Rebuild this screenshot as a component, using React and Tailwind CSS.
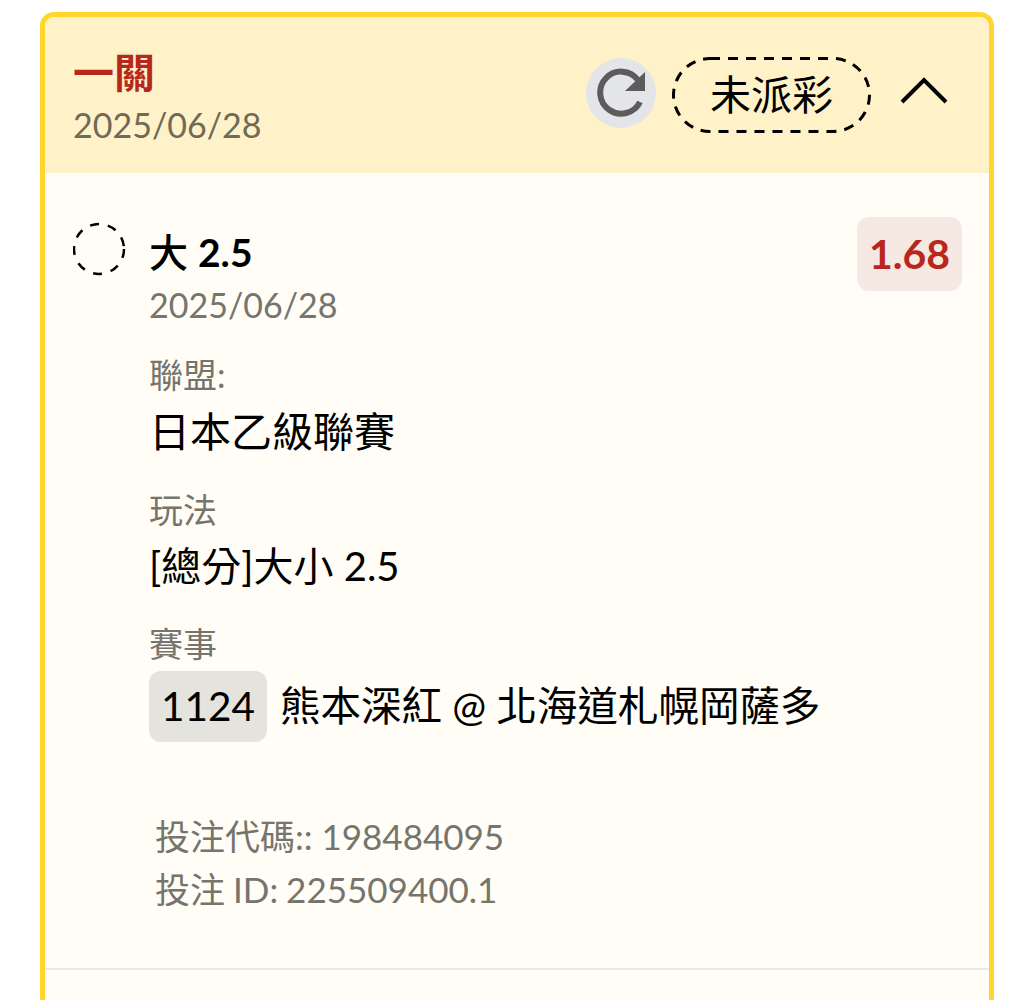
const font = { fontFamily: 'Lato, "Noto Sans CJK TC", sans-serif' }

function Field({ label, children, className = '' }) {
  return (
    <div className={className}>
      <div className="text-[34px] leading-[46px] text-[#75746d]">{label}</div>
      {children}
    </div>
  )
}

export default function App() {
  return (
    <div className="h-[1000px] overflow-hidden bg-white pt-[12px] pl-[40px] pr-[39px]" style={font}>
      <div className="h-[1100px] rounded-[14px] border-[5px] border-[#ffd52e] bg-[#fffdf5] overflow-hidden">
        <div className="h-[156px] bg-[#fff2c8] flex items-center justify-between pl-[28px] pr-[40px]">
          <div className="mt-[8px]">
            <div className="text-[41px] leading-[50px] font-bold text-[#b9271c]">一關</div>
            <div className="mt-[1px] text-[34px] leading-[52px] text-[#6f6a58]">2025/06/28</div>
          </div>
          <div className="flex items-center">
            <div className="w-[70px] h-[70px] mt-[-4px] rounded-full bg-[#e3e5e8] flex items-center justify-center mr-[16px]">
              <svg width="50" height="50" viewBox="0 0 50 50" fill="none">
                <path d="M44 34A21 21 0 1 1 42 12" stroke="#5c5c5c" strokeWidth="6" />
                <path d="M49 4v19H29z" fill="#5c5c5c" />
              </svg>
            </div>
            <div className="relative w-[199px] h-[76px] flex items-center justify-center text-[41px] text-black mr-[28px]">
              <svg className="absolute inset-0" width="199" height="76" fill="none">
                <rect x="1.5" y="1.5" width="196" height="73" rx="36.5" stroke="#000" strokeWidth="3" strokeDasharray="10 8" />
              </svg>
              未派彩
            </div>
            <svg width="50" height="30" viewBox="0 0 50 30" fill="none" className="mt-[-8px]">
              <path d="M3 26 25 4l22 22" stroke="#000" strokeWidth="4" />
            </svg>
          </div>
        </div>

        <div className="pl-[28px] pr-[27px] pt-[44px] flex items-start">
          <svg width="54" height="54" viewBox="0 0 54 54" fill="none" className="mt-[5px] shrink-0">
            <circle cx="26" cy="27" r="25" stroke="#000" strokeWidth="2.5" strokeDasharray="9 9" />
          </svg>
          <div className="ml-[22px] flex-1 min-w-0">
            <div className="flex justify-between items-start">
              <div>
                <div className="text-[39px] leading-[46px] mt-[12px] text-black">
                  <span className="font-medium">大</span> <span className="font-bold">2.5</span>
                </div>
                <div className="mt-[6px] text-[34px] leading-[48px] text-[#75746d]">2025/06/28</div>
              </div>
              <div className="h-[74px] w-[105px] rounded-[12px] bg-[#f6e8e2] text-[41px] font-bold text-[#b9271c] flex items-center justify-center">1.68</div>
            </div>
            <Field label="聯盟:" className="mt-[23px]">
              <div className="text-[41px] leading-[66px] text-black mt-[1px]">日本乙級聯賽</div>
            </Field>
            <Field label="玩法" className="mt-[22px]">
              <div className="text-[40px] leading-[66px] text-black">[總分]大小 2.5</div>
            </Field>
            <Field label="賽事" className="mt-[22px]">
              <div className="flex items-center mt-[4px] text-[40.5px] text-black">
                <span className="h-[71px] w-[118px] rounded-[12px] bg-[#e4e3de] flex items-center justify-center">1124</span>
                <span className="ml-[13px]">熊本深紅 @ 北海道札幌岡薩多</span>
              </div>
            </Field>
            <div className="mt-[68px] ml-[6px] text-[35px] leading-[53px] text-[#75746d]">
              <div>投注代碼:: 198484095</div>
              <div className="[word-spacing:-1px]">投注 ID: 225509400.1</div>
            </div>
          </div>
        </div>
        <div className="mt-[52px] h-[2px] bg-[#e9e8e2]" />
      </div>
    </div>
  )
}
